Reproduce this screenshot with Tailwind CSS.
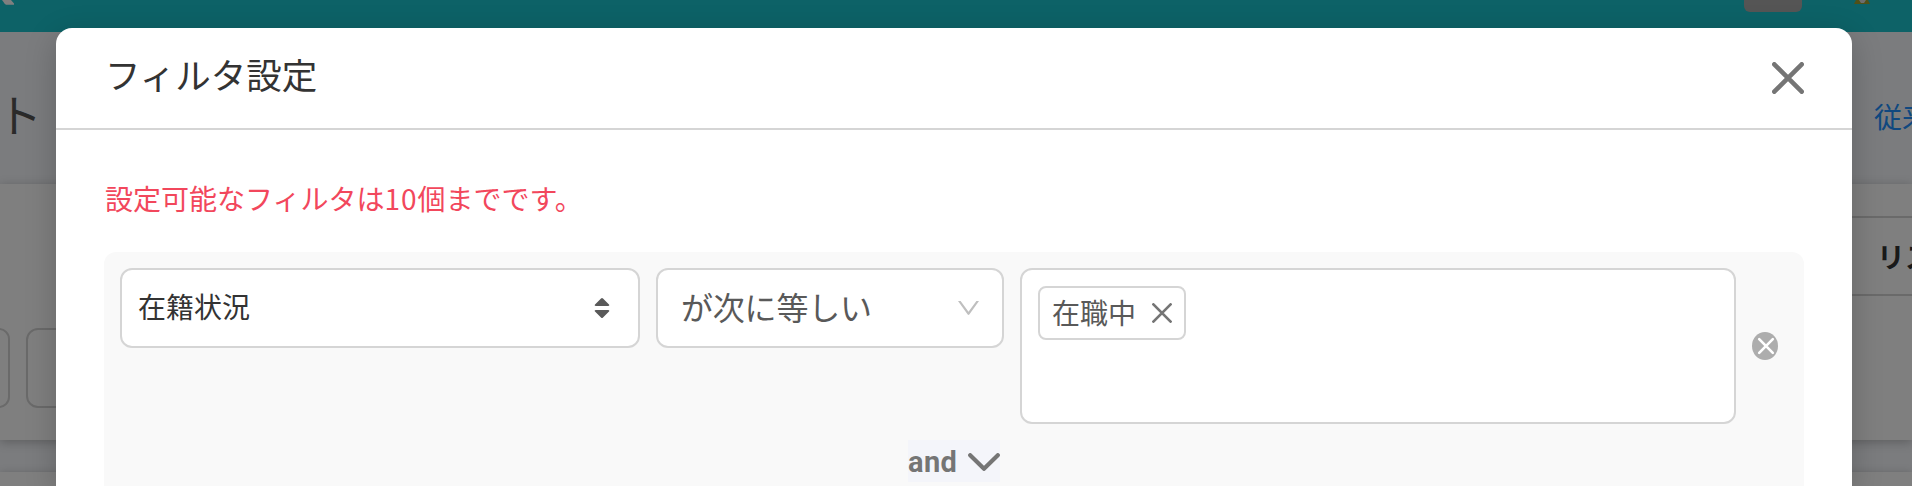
<!DOCTYPE html>
<html lang="ja">
<head>
<meta charset="utf-8">
<title>フィルタ設定</title>
<script src="https://cdn.jsdelivr.net/npm/@tailwindcss/browser@4"></script>
</head>
<body class="relative h-[486px] overflow-hidden bg-[#f6f8fc] font-['Noto_Sans_CJK_JP',sans-serif] text-[#333]">
  <!-- page behind the dialog -->
  <div class="flex h-[486px] flex-col overflow-hidden">
    <header class="flex h-8 shrink-0 items-start bg-[#1ac4ce]">
      <svg class="h-5 w-5" viewBox="0 0 20 20"><path d="M2 0H11L14 3.500V4.800H6Q4.500 4 3.500 2Z" fill="#fff"/></svg>
      <div class="ml-auto h-3 w-[58px] rounded-b-md bg-[#aaa]"></div>
      <svg class="mr-[40px] ml-[50px] h-1 w-[20px]" viewBox="0 0 20 4"><path d="M4 0H16L18 4H2Z" fill="#a0a030"/><path d="M7 0H14L12 3H9Z" fill="#ddd"/></svg>
    </header>
    <div class="flex h-[152px] shrink-0 items-center justify-between">
      <div class="-ml-[3px] pt-[10px] text-[45px] leading-none text-[#555]">ト</div>
      <div class="w-[38px] pt-4 text-[28px] leading-none whitespace-nowrap text-[#2090ff]">従来</div>
    </div>
    <div class="flex h-64 shrink-0 justify-between">
      <div class="flex w-[900px] items-start gap-4 bg-white pt-36 shadow-[0_2px_10px_rgba(0,0,0,0.25)]">
        <div class="-ml-3 h-20 w-[22px] rounded-xl border-2 border-[#d5d5d5]"></div>
        <div class="h-20 w-[400px] rounded-xl border-2 border-[#d5d5d5]"></div>
      </div>
      <div class="w-[900px] bg-white pt-8 shadow-[0_2px_10px_rgba(0,0,0,0.25)]">
        <div class="flex h-20 items-center justify-end overflow-hidden border-y-2 border-[#d5d5d5]">
          <div class="w-[35px] text-[28px] leading-none font-bold whitespace-nowrap">リスト</div>
        </div>
      </div>
    </div>
    <div class="mt-8 h-[14px] shrink-0 bg-white shadow-[0_2px_10px_rgba(0,0,0,0.25)]"></div>
  </div>

  <div class="absolute inset-0 bg-black/50"></div>

  <!-- filter dialog -->
  <section class="absolute top-7 left-14 flex h-[458px] w-[1796px] flex-col rounded-t-2xl bg-white shadow-[0_8px_32px_rgba(0,0,0,0.2)]">
    <div class="flex h-[102px] shrink-0 items-center justify-between border-b-2 border-[#d5d5d5] px-12">
      <h1 class="pb-[8px] pl-px text-[35.5px] leading-none">フィルタ設定</h1>
      <svg class="h-8 w-8" viewBox="0 0 32 32" fill="none" stroke="#757575" stroke-width="4.600" stroke-linecap="round"><path d="M2.300 2.300 29.700 29.700M29.700 2.300 2.300 29.700"/></svg>
    </div>
    <div class="flex grow flex-col px-12 pt-[54px]">
      <p class="h-[68px] pl-px text-[28px] leading-none text-[#f2475c]">設定可能なフィルタは<span class="tracking-[1px]">10</span>個までです。</p>
      <div class="flex grow flex-col rounded-t-xl bg-[#f9f9f9] px-4 pt-4">
        <div class="flex items-start gap-4">
          <div class="flex h-20 w-[520px] items-center justify-between rounded-xl border-2 border-[#d5d5d5] bg-white pr-7 pl-4">
            <span class="pb-1 text-[28px] leading-none">在籍状況</span>
            <svg class="h-5 w-4" viewBox="0 0 16 20" fill="#595959"><path d="M7 .5Q8-.5 9 .5L15 6.5Q16 8 14 8H2Q0 8 1 6.5ZM7 19.500Q8 20.500 9 19.500L15 13.500Q16 12 14 12H2Q0 12 1 13.500Z"/></svg>
          </div>
          <div class="flex h-20 w-[348px] items-center justify-between rounded-xl border-2 border-[#d5d5d5] bg-white pr-[23px] pl-[23px] text-[#595959]">
            <span class="pb-1 text-[32px] leading-none tracking-[-0.2px]">が次に等しい</span>
            <svg class="h-[14px] w-[21px]" viewBox="0 0 21 14" fill="#bfbfbf"><path d="M0 0H2.600L10.500 10.800 18.400 0H21L11.300 13.500Q10.500 14.300 9.700 13.500Z"/></svg>
          </div>
          <div class="flex h-[156px] w-[716px] items-start rounded-xl border-2 border-[#d5d5d5] bg-white p-4">
            <div class="flex h-[54px] w-[148px] shrink-0 items-center justify-between rounded-lg border-2 border-[#d5d5d5] pr-3 pl-3 text-[#595959]">
              <span class="pb-[2px] text-[28px] leading-none">在職中</span>
              <svg class="h-5 w-5" viewBox="0 0 20 20" fill="none" stroke="#757575" stroke-width="2.700" stroke-linecap="round"><path d="M1.400 1.400 18.600 18.600M18.600 1.400 1.400 18.600"/></svg>
            </div>
          </div>
          <svg class="mt-16 h-7 w-[26px]" viewBox="0 0 26 28"><ellipse cx="13" cy="14" rx="13" ry="14" fill="#adadad"/><path d="M7.200 7.200 20.800 20.800M20.800 7.200 7.200 20.800" fill="none" stroke="#fff" stroke-width="2.600" stroke-linecap="round"/></svg>
        </div>
        <div class="mt-4 ml-[788px] flex h-[42px] w-[92px] items-center justify-between bg-[#f4f5fa] text-[#757575]">
          <span class="pt-[3px] font-[Roboto,sans-serif] text-[29px] leading-none font-bold tracking-[0.4px]">and</span>
          <svg class="mt-[2px] h-[18px] w-8" viewBox="0 0 32 18" fill="none" stroke="#757575" stroke-width="4.200" stroke-linecap="round" stroke-linejoin="round"><path d="M2.200 2.200 16 15.800 29.800 2.200"/></svg>
        </div>
      </div>
    </div>
  </section>
</body>
</html>
